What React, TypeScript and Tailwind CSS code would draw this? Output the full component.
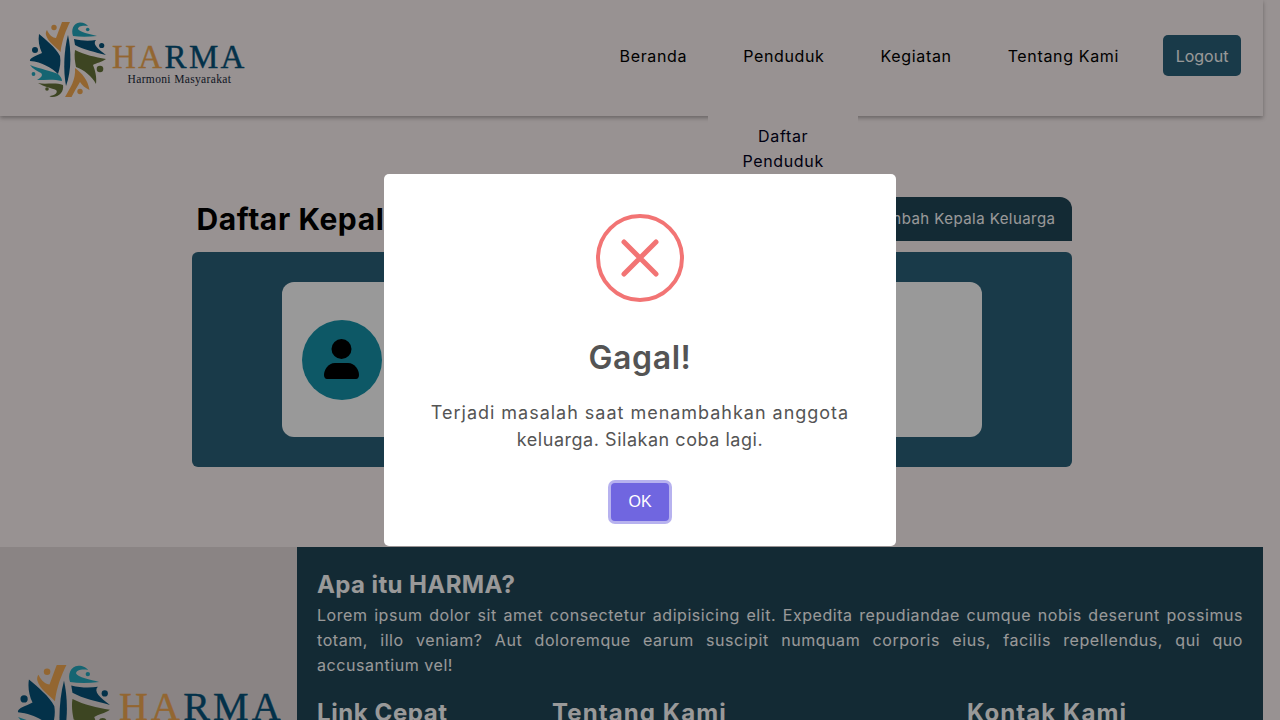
const navItems = ["Beranda", "Penduduk", "Kegiatan", "Tentang Kami"]

// Logo mark, traced by hand from the reference (viewBox is in header pixels)
function LogoMark({ className }: { className: string }) {
  const orange = "#f5ab52"
  const navy = "#05527a"
  const teal = "#24a8bf"
  const olive = "#66743a"
  return (
    <svg className={className} viewBox="25 18 86 84">
      {/* center leaf */}
      <path d="M68 35C71 48 72 70 66 86C63 70 64 50 68 35Z" fill={navy} />
      {/* orange top */}
      <path d="M62 22H70C66 30 62 40 60.5 52C56 47 48 42 46 35C45.5 33 46 31 47 30C49 35 53 38 56 38C58 33 60 27 62 22Z" fill={orange} />
      <circle cx="54" cy="27.5" r="2.7" fill={orange} />
      {/* teal top right */}
      <path d="M73 36C71 30 73 23 80 22.5C84 22.5 86 24 88 26C83 25 78 26 78 29C79 32 90 34 97 36C88 37 80 37 73 36Z" fill={teal} />
      <circle cx="87.7" cy="29.5" r="1.8" fill={teal} />
      {/* navy right */}
      <path d="M74 39C82 41 90 41 96 40C92 44 98 49 106 55C95 52 84 50 75 45Z" fill={navy} />
      <circle cx="101.7" cy="45.5" r="2.6" fill={navy} />
      {/* olive right */}
      <path d="M75 50C85 55 95 57 106 59C102 62 96 63 93 65C95 70 97 77 96 84C92 76 84 70 76 67C75 62 74 56 75 50Z" fill={olive} />
      <circle cx="100" cy="69" r="3.3" fill={olive} />
      {/* orange bottom */}
      <path d="M75 68C82 73 88 80 89.5 90C85 88 82 85 80 82C77 87 74 92 71.5 97H65C70 88 76 80 75 68Z" fill={orange} />
      <circle cx="80" cy="91.5" r="2.7" fill={orange} />
      {/* olive bottom */}
      <path d="M38 83C45 85 55 82 63 85C64 91 60 97 52 97C50 97 49 96 50 96C56 95 58 92 56 90C52 88 44 87 38 83Z" fill={olive} />
      <circle cx="47" cy="89" r="1.8" fill={olive} />
      {/* teal left */}
      <path d="M30 65C40 69 52 71 58 74C60 76 62 78 62 81C54 79 46 80 37 80C42 77 43 75 41 73C37 71 33 69 30 65Z" fill={teal} />
      <circle cx="33.5" cy="74" r="1.9" fill={teal} />
      {/* navy left */}
      <path d="M39 34C46 40 56 48 60 56C61 62 60 68 58 74C52 68 42 62 30 61C29 58 36 56 42 53C39 47 38 40 39 34Z" fill={navy} />
      <circle cx="35" cy="50" r="3" fill={navy} />
    </svg>
  )
}

export default function App() {
  return (
    <div className="relative h-screen overflow-hidden bg-[#fdf3f3] font-['Inter',sans-serif] text-black">
      <div className="w-[1263px]">
        {/* Navbar */}
        <header className="relative flex h-[116px] items-center justify-between bg-[#fdf3f3] pl-[25px] pr-[22px] shadow-[0_2px_4px_rgba(0,0,0,0.3)]">
          <div className="mt-1 flex items-start">
            <LogoMark className="h-[84px] w-[86px]" />
            <div className="ml-[1px] flex flex-col items-center pt-[24px]">
              <span className="font-['Liberation_Serif',serif] text-[33px] leading-[30px] tracking-[2.4px] [-webkit-text-stroke:0.4px]">
                <span className="text-[#f5ab52]">HA</span>
                <span className="text-[#05527a]">RMA</span>
              </span>
              <span className="mt-[1px] font-['Liberation_Serif',serif] text-[11.5px] leading-[12px] tracking-[0.35px] text-[#1a2a3a]">
                Harmoni Masyarakat
              </span>
            </div>
          </div>

          <nav className="flex items-center pb-[5px]">
            {navItems.map((item) => (
              <div key={item} className="relative px-7 text-base tracking-[0.65px]">
                {item}
                {item === "Penduduk" && (
                  <div className="absolute left-[-7px] top-[72px] h-[90px] w-[150px] bg-[#fdf3f3] px-8 pt-2 text-center leading-[25px] text-[#000020]">
                    Daftar Penduduk
                  </div>
                )}
              </div>
            ))}
            <button className="ml-4 h-[41px] w-[78px] rounded-[5px] bg-[#2b627a] text-base text-white">Logout</button>
          </nav>
        </header>

        {/* Daftar Kepala Keluarga */}
        <main className="mx-auto w-[880px] pb-20 pt-[81px]">
          <div className="flex items-end justify-between">
            <h1 className="pb-[3px] pl-[5px] text-[30px] font-bold leading-[38px] tracking-[0.6px]">Daftar Kepala Keluarga</h1>
            <button className="h-[44px] rounded-t-xl bg-[#204658] px-4 text-[15px] font-normal tracking-[0.45px] text-white">
              Tambah Kepala Keluarga
            </button>
          </div>
          <div className="mt-[11px] rounded-md bg-[#2b627a] py-[30px]">
            <div className="mx-auto flex h-[155px] w-[700px] items-center rounded-xl bg-white px-5">
              <div className="flex h-20 w-20 items-center justify-center rounded-full bg-[#1693aa]">
                <svg className="h-[44px] w-[44px]" viewBox="0 0 44 44">
                  <circle cx="21.5" cy="11" r="10" fill="#000" />
                  <path d="M4 37C4 32 8 25 15 25H28C35 25 39 32 39 37C39 39 38 41 36 41H7C5 41 4 39 4 37Z" fill="#000" />
                </svg>
              </div>
            </div>
          </div>
        </main>

        {/* Footer */}
        <footer className="flex">
          <div className="w-[297px] shrink-0 bg-[#e6dcdc] pb-16 pl-3 pt-[113px]">
            <div className="flex items-start">
              <LogoMark className="h-[102px] w-[104px]" />
              <div className="ml-[3px] flex flex-col items-center pt-[29px]">
                <span className="font-['Liberation_Serif',serif] text-[40px] leading-[36px] tracking-[3.2px] [-webkit-text-stroke:0.4px]">
                  <span className="text-[#f5ab52]">HA</span>
                  <span className="text-[#05527a]">RMA</span>
                </span>
              </div>
            </div>
          </div>
          <div className="flex-1 bg-[#204658] px-5 pt-5 text-white">
            <h2 className="text-2xl font-bold leading-9 tracking-[0.4px]">Apa itu HARMA?</h2>
            <p className="text-justify text-base leading-[25px] tracking-[0.55px]">
              Lorem ipsum dolor sit amet consectetur adipisicing elit. Expedita repudiandae cumque nobis deserunt
              possimus totam, illo veniam? Aut doloremque earum suscipit numquam corporis eius, facilis repellendus,
              qui quo accusantium vel!
            </p>
            <div className="mt-[17px] flex text-2xl font-bold leading-9">
              <h2 className="w-[235px] tracking-[0.6px]">Link Cepat</h2>
              <h2 className="w-[415px] tracking-[1.1px]">Tentang Kami</h2>
              <h2 className="tracking-[1.1px]">Kontak Kami</h2>
            </div>
          </div>
        </footer>
      </div>

      {/* Error dialog */}
      <div className="absolute inset-0 flex items-center justify-center bg-black/40">
        <div className="flex h-[372px] w-[512px] flex-col items-center rounded-[5px] bg-white pt-10 text-[#545454]">
          <svg className="h-[88px] w-[88px]" viewBox="0 0 88 88">
            <circle cx="44" cy="44" r="42" fill="none" stroke="#f27474" strokeWidth="4" />
            <path d="M28 28L60 60M60 28L28 60" fill="none" stroke="#f27474" strokeWidth="5" strokeLinecap="round" />
          </svg>
          <h2 className="mt-[33px] text-[32px] font-semibold leading-[45px] tracking-[0.6px]">Gagal!</h2>
          <p className="mt-[19px] w-[460px] text-center text-lg leading-[27px]">
            <span className="block tracking-[0.98px]">Terjadi masalah saat menambahkan anggota</span>
            <span className="block tracking-[0.53px]">keluarga. Silakan coba lagi.</span>
          </p>
          <button className="mt-[30px] h-[38px] w-[58px] rounded-[4px] bg-[#7066e0] font-['Liberation_Sans',sans-serif] text-base text-white ring-[3px] ring-[#7066e0]/50">
            OK
          </button>
        </div>
      </div>
    </div>
  )
}
